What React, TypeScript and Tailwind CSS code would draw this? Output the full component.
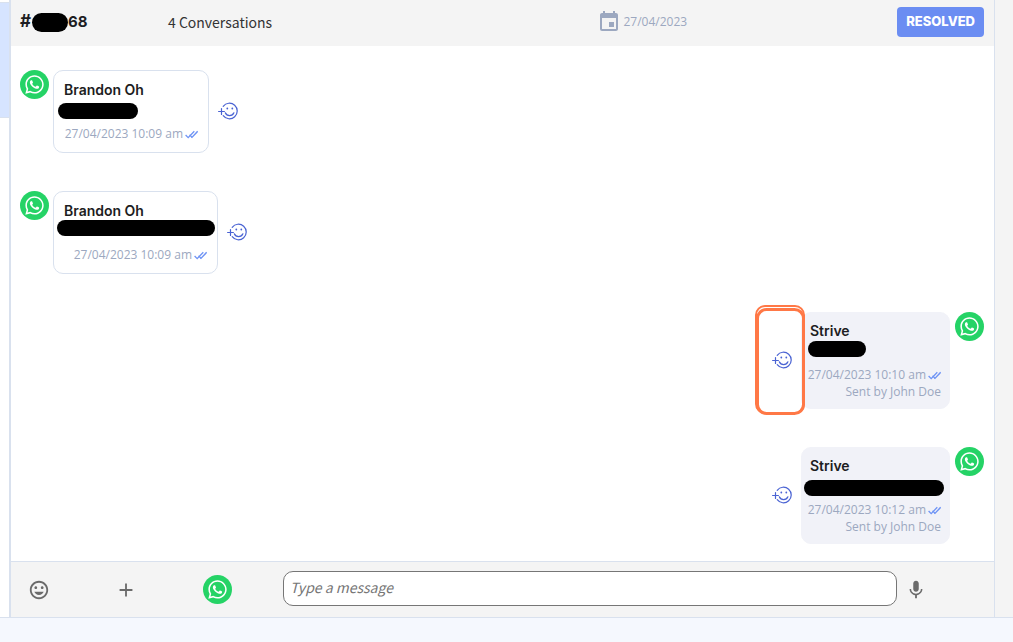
import { FaWhatsapp } from "react-icons/fa";
import { MdAdd, MdEvent, MdInsertEmoticon, MdMic } from "react-icons/md";
import clsx from "clsx";

type Message = {
  id: number;
  author: string;
  time: string;
  sentBy?: string;
  width: string;
  redaction: string;
  highlighted?: boolean;
};

const messages: Message[] = [
  {
    id: 1,
    author: "Brandon Oh",
    time: "27/04/2023 10:09 am",
    width: "w-[156px]",
    redaction: "top-8 left-1 w-20",
  },
  {
    id: 2,
    author: "Brandon Oh",
    time: "27/04/2023 10:09 am",
    width: "w-[165px]",
    redaction: "top-7 left-[3px] w-[158px]",
  },
  {
    id: 3,
    author: "Strive",
    time: "27/04/2023 10:10 am",
    sentBy: "Sent by John Doe",
    width: "w-[149px]",
    redaction: "top-7 left-[6px] w-[58px]",
    highlighted: true,
  },
  {
    id: 4,
    author: "Strive",
    time: "27/04/2023 10:12 am",
    sentBy: "Sent by John Doe",
    width: "w-[149px]",
    redaction: "top-8 left-[2px] w-[140px]",
  },
];

const WhatsappBadge = () => (
  <span className="flex size-[29px] shrink-0 items-center justify-center rounded-full bg-[#25d366] text-white">
    <FaWhatsapp size={21} />
  </span>
);

const DoubleCheck = () => (
  <svg viewBox="0 0 13 10" className="h-[10px] w-[13px] shrink-0" fill="none" stroke="#6f94f5" strokeWidth="1.3">
    <path d="M0.600 6 3.200 8.600 9.300 2.200" />
    <path d="M4.600 5.800 7 8.400 12.600 2.200" />
    <path d="M6 8.800 12.600 3.400" strokeWidth="0.6" />
  </svg>
);

const ReactButton = ({ highlighted }: { highlighted?: boolean }) => (
  <div className="relative shrink-0 pb-[2px]">
    <button type="button" aria-label="Add reaction" className="block">
      <svg
        viewBox="0 0 20 18"
        className="h-[18px] w-5"
        fill="none"
        stroke="#4a63d3"
        strokeWidth="1.2"
        strokeLinecap="round"
      >
        <path d="M5.200 4.300A7.800 7.800 0 1 1 5.200 13.700" />
        <path d="M0.600 9.500h5.800M3.500 6.600v5.800" />
        <path d="M7.300 10.800c1.600 3.800 7 3.800 8.600 0" />
        <circle cx="9.300" cy="6.500" r="0.900" fill="#4a63d3" stroke="none" />
        <circle cx="14.300" cy="6.500" r="0.900" fill="#4a63d3" stroke="none" />
      </svg>
    </button>
    {highlighted && (
      <svg
        viewBox="0 0 52 112"
        className="pointer-events-none absolute -top-[47px] -left-[18px] z-10 h-28 w-[52px] max-w-none"
        fill="none"
        stroke="#ff7846"
      >
        <rect x="2" y="2" width="48" height="107" rx="9" strokeWidth="2" />
        <rect x="3.500" y="5.500" width="46" height="104" rx="9" strokeWidth="3" />
      </svg>
    )}
  </div>
);

const MessageRow = ({ message }: { message: Message }) => {
  const outgoing = Boolean(message.sentBy);

  return (
    <li className={clsx("flex items-start", outgoing && "flex-row-reverse")}>
      <WhatsappBadge />
      <div className={clsx("flex items-center gap-[9px]", outgoing ? "mr-[5px] flex-row-reverse" : "ml-1")}>
        <div
          className={clsx(
            "relative rounded-[10px] border pb-[9px]",
            message.width,
            outgoing ? "border-[#f1f2f8] bg-[#f1f2f8] px-2 pt-2" : "border-[#d9e1ee] bg-white px-[10px] pt-[9px]",
          )}
        >
          <p className="text-[14px] leading-5 font-semibold text-[#1d1d22]">{message.author}</p>
          <span className={clsx("absolute h-4 rounded-full bg-black", message.redaction)} />
          <div className="mt-6 font-['Open_Sans',sans-serif] text-[12px] text-[#9ca8c0]">
            <p className="flex items-center justify-end gap-[2px] leading-[19px] whitespace-nowrap">
              {message.time}
              <DoubleCheck />
            </p>
            {message.sentBy && <p className="text-right leading-[15px]">{message.sentBy}</p>}
          </div>
        </div>
        <ReactButton highlighted={message.highlighted} />
      </div>
    </li>
  );
};

const ChatHeader = () => (
  <header className="flex h-[46px] items-center bg-[#f4f4f4] pr-[10px] pb-[2px] pl-[9px]">
    <h1 className="relative flex w-[148px] items-center text-[15px] font-bold text-[#1d1d22]">
      <span className="w-12 text-[17px]">#</span>68
      <span className="absolute left-3 h-[19px] w-9 rounded-full bg-black" />
    </h1>
    <p className="flex-1 font-['Noto_Sans_CJK_SC',sans-serif] text-[14px] text-[#333]">4 Conversations</p>
    <div className="mr-[210px] flex items-center gap-[3px] text-[#9ca8c0]">
      <MdEvent size={24} />
      <time className="font-['Open_Sans',sans-serif] text-[12px]">27/04/2023</time>
    </div>
    <button type="button" className="h-[30px] rounded-[4px] bg-[#6b8df2] px-[9px] text-[13px] font-extrabold text-white">
      RESOLVED
    </button>
  </header>
);

const Composer = () => (
  <form className="flex h-14 items-center border-t border-[#d9e1ee] bg-[#f4f4f4] pr-[67px] pl-[17px] text-[#6b6b6b]">
    <button type="button" aria-label="Emoji" className="mr-[65px]">
      <MdInsertEmoticon size={22} />
    </button>
    <button type="button" aria-label="Attach" className="mr-[66px]">
      <MdAdd size={22} />
    </button>
    <button type="button" aria-label="WhatsApp" className="mr-[51px]">
      <WhatsappBadge />
    </button>
    <input
      type="text"
      aria-label="Message"
      placeholder="Type a message"
      className="mb-[2px] h-[35px] min-w-0 flex-1 rounded-[10px] border border-[#767676] bg-white px-[6px] pb-1 font-['Noto_Sans_CJK_SC',sans-serif] text-[14px] italic placeholder:text-[#757575]"
    />
    <button type="button" aria-label="Record" className="ml-2">
      <MdMic size={22} />
    </button>
  </form>
);

const App = () => {
  return (
    <div className="flex min-h-screen flex-col bg-[#f5f8fe] font-[Inter,sans-serif]">
      <div className="flex flex-1 border-b border-[#d9e1ee]">
        <aside className="w-[9px] bg-white pt-[2px]">
          <div className="h-[116px] border-y border-[#d9e1ee] bg-[#d6e4ff]" />
        </aside>
        <main className="flex min-w-0 flex-1 flex-col border-r border-l-2 border-[#d9e1ee] bg-white">
          <ChatHeader />
          <ul className="flex flex-1 flex-col gap-[38px] pt-6 pr-[10px] pb-4 pl-[9px]">
            {messages.map((message) => (
              <MessageRow message={message} key={message.id} />
            ))}
          </ul>
          <Composer />
        </main>
        <aside className="w-[18px] bg-[#f4f4f4]" />
      </div>
      <footer className="h-6" />
    </div>
  );
};

export default App;
